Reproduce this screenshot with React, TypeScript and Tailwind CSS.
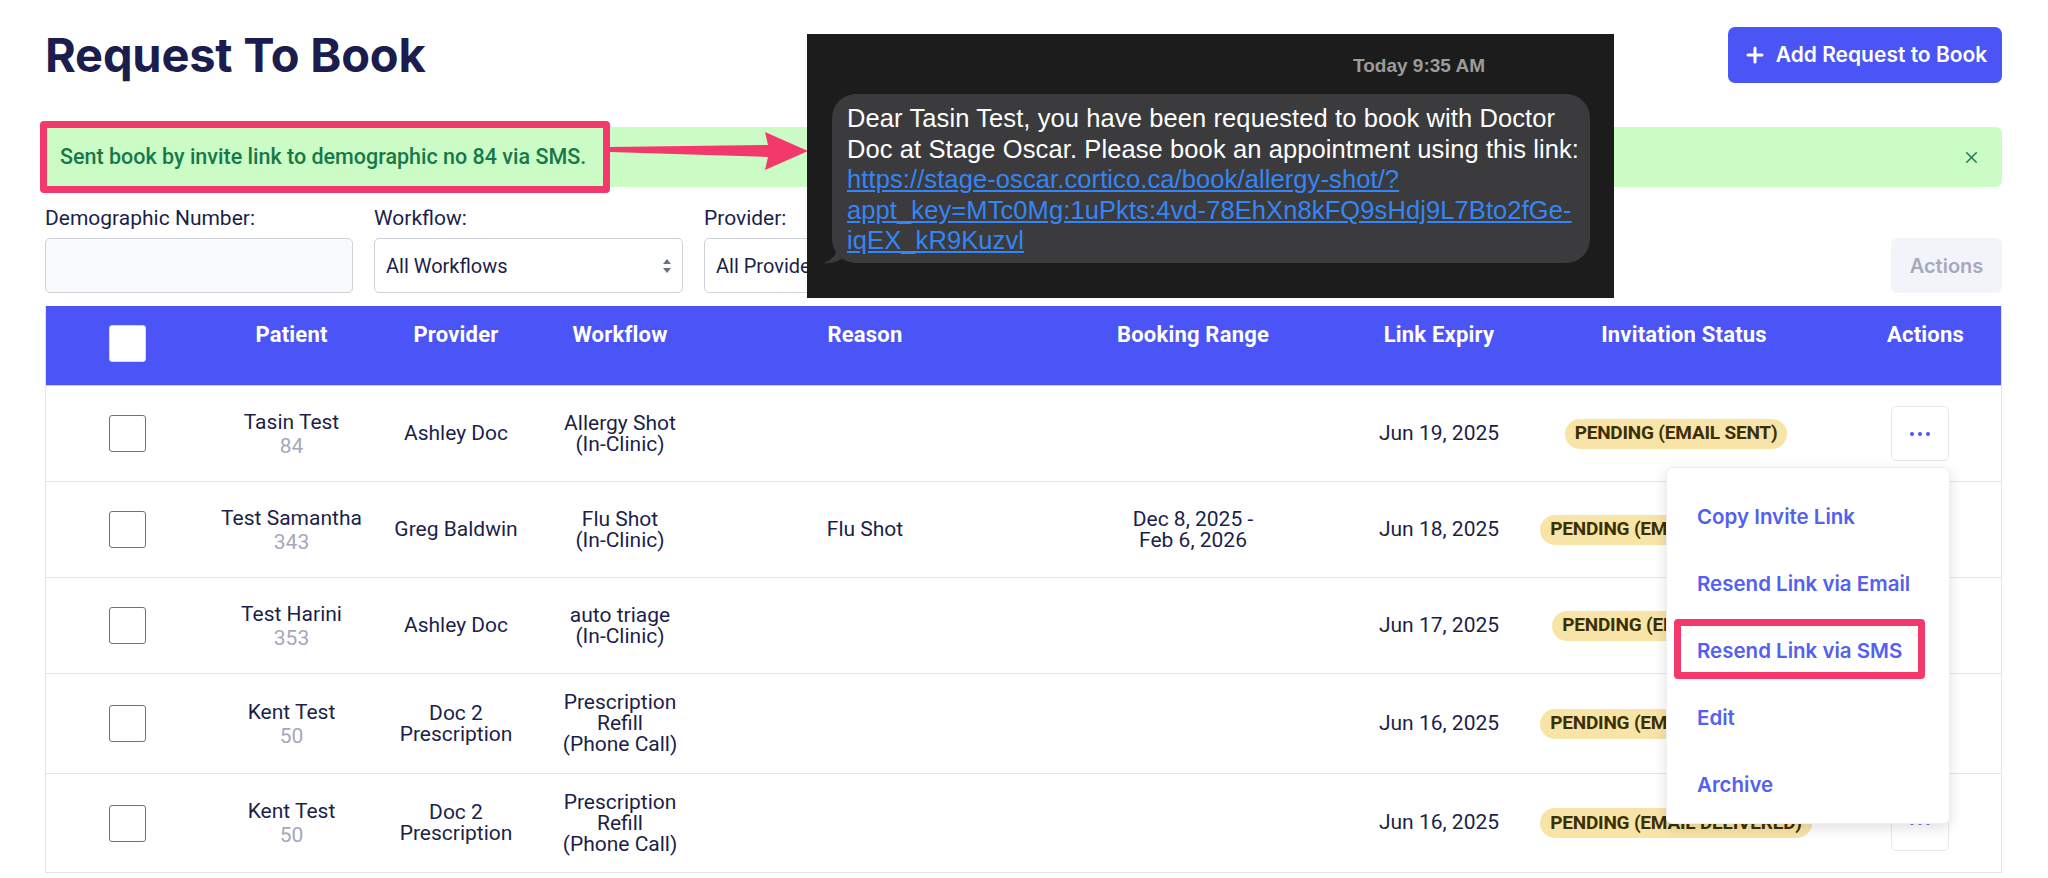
import { Plus, X } from "lucide-react";

interface Row {
  name: string;
  no: string;
  provider: string[];
  workflow: string[];
  reason: string;
  range: string[];
  expiry: string;
  status: string;
  height: string;
}

const rows: Row[] = [
  {
    name: "Tasin Test",
    no: "84",
    provider: ["Ashley Doc"],
    workflow: ["Allergy Shot", "(In-Clinic)"],
    reason: "",
    range: [],
    expiry: "Jun 19, 2025",
    status: "PENDING (EMAIL SENT)",
    height: "h-[96px]",
  },
  {
    name: "Test Samantha",
    no: "343",
    provider: ["Greg Baldwin"],
    workflow: ["Flu Shot", "(In-Clinic)"],
    reason: "Flu Shot",
    range: ["Dec 8, 2025 -", "Feb 6, 2026"],
    expiry: "Jun 18, 2025",
    status: "PENDING (EMAIL DELIVERED)",
    height: "h-[96px]",
  },
  {
    name: "Test Harini",
    no: "353",
    provider: ["Ashley Doc"],
    workflow: ["auto triage", "(In-Clinic)"],
    reason: "",
    range: [],
    expiry: "Jun 17, 2025",
    status: "PENDING (EMAIL OPENED)",
    height: "h-[96px]",
  },
  {
    name: "Kent Test",
    no: "50",
    provider: ["Doc 2", "Prescription"],
    workflow: ["Prescription", "Refill", "(Phone Call)"],
    reason: "",
    range: [],
    expiry: "Jun 16, 2025",
    status: "PENDING (EMAIL DELIVERED)",
    height: "h-[100px]",
  },
  {
    name: "Kent Test",
    no: "50",
    provider: ["Doc 2", "Prescription"],
    workflow: ["Prescription", "Refill", "(Phone Call)"],
    reason: "",
    range: [],
    expiry: "Jun 16, 2025",
    status: "PENDING (EMAIL DELIVERED)",
    height: "h-[99px]",
  },
];

const cols =
  "grid grid-cols-[163px_165px_164px_164px_326px_330px_162px_328px_155px]";

const menuItems = [
  "Copy Invite Link",
  "Resend Link via Email",
  "Resend Link via SMS",
  "Edit",
  "Archive",
];

function Chevrons() {
  return (
    <svg width="10" height="16" viewBox="0 0 10 16" className="fill-[#6b7280]">
      <path d="M5 1 L9 6 H1 Z" />
      <path d="M5 15 L9 10 H1 Z" />
    </svg>
  );
}

function Dots() {
  return (
    <div className="flex items-center gap-[4px]">
      <span className="h-[4px] w-[4px] rounded-full bg-[#4b55f6]" />
      <span className="h-[4px] w-[4px] rounded-full bg-[#4b55f6]" />
      <span className="h-[4px] w-[4px] rounded-full bg-[#4b55f6]" />
    </div>
  );
}

function Lines({ items }: { items: string[] }) {
  return (
    <div className="flex flex-col items-center leading-[21px]">
      {items.map((t, i) => (
        <span key={i}>{t}</span>
      ))}
    </div>
  );
}

export default function App() {
  return (
    <div className="relative h-[878px] w-[2048px] overflow-hidden bg-white pl-[45px] pr-[46px] pt-[27px] font-['Roboto',sans-serif] text-[#1c1f4a]">
      {/* Header */}
      <div className="flex h-[56px] items-center justify-between">
        <h1 className="font-['Inter',sans-serif] text-[47px] font-bold leading-[56px] tracking-[-0.2px] text-[#1a1d4e]">
          Request To Book
        </h1>
        <button className="flex h-[56px] w-[274px] items-center justify-center gap-[9px] rounded-[7px] bg-[#4b55f5] font-['Inter',sans-serif] text-[21px] font-semibold text-white">
          <Plus size={24} strokeWidth={3} />
          Add Request to Book
        </button>
      </div>

      {/* Success banner */}
      <div className="relative mt-[44px] flex h-[60px] items-center justify-between rounded-[6px] bg-[#ccfcc5] pl-[15px] pr-[21px]">
        <span className="text-[21.5px] font-medium text-[#16794a]">
          Sent book by invite link to demographic no 84 via SMS.
        </span>
        <X size={19} strokeWidth={1.8} className="text-[#16794a]" />
        <div className="absolute left-[-5px] top-[-6px] h-[72px] w-[570px] rounded-[4px] border-[7px] border-[#f3396b]" />
      </div>

      {/* Filters */}
      <div className="mt-[19px] flex items-end justify-between">
        <div className="flex gap-[21px]">
          <div className="flex w-[308px] flex-col gap-[8px]">
            <span className="text-[21px] leading-[24px]">Demographic Number:</span>
            <div className="h-[55px] rounded-[5px] border border-[#cfd2d8] bg-[#f9fafb]" />
          </div>
          <div className="flex w-[309px] flex-col gap-[8px]">
            <span className="text-[21px] leading-[24px]">Workflow:</span>
            <div className="flex h-[55px] items-center justify-between rounded-[5px] border border-[#cfd2d8] bg-white pl-[11px] pr-[10px] text-[20px]">
              All Workflows
              <Chevrons />
            </div>
          </div>
          <div className="flex w-[309px] flex-col gap-[8px]">
            <span className="text-[21px] leading-[24px]">Provider:</span>
            <div className="flex h-[55px] items-center justify-between rounded-[5px] border border-[#cfd2d8] bg-white pl-[11px] pr-[10px] text-[20px]">
              All Providers
              <Chevrons />
            </div>
          </div>
        </div>
        <button className="h-[55px] w-[111px] rounded-[6px] bg-[#f3f4f9] font-['Inter',sans-serif] text-[20px] font-semibold text-[#a6a9bd]">
          Actions
        </button>
      </div>

      {/* Table */}
      <div className="mt-[13px] border-x border-[#e3e5ea]">
        <div className={`${cols} h-[80px] border-b border-[#c9ccfb] bg-[#4b55f7] text-center text-[22px] font-bold leading-[24px] tracking-[0.2px] text-white`}>
          <div className="flex justify-center pt-[19px]">
            <div className="h-[37px] w-[37px] rounded-[3px] border border-[#d5d8fb] bg-white" />
          </div>
          <div className="pt-[17px]">Patient</div>
          <div className="pt-[17px]">Provider</div>
          <div className="pt-[17px]">Workflow</div>
          <div className="pt-[17px]">Reason</div>
          <div className="pt-[17px]">Booking Range</div>
          <div className="pt-[17px]">Link Expiry</div>
          <div className="pt-[17px]">Invitation Status</div>
          <div className="pt-[17px]">Actions</div>
        </div>

        {rows.map((r, i) => (
          <div
            key={i}
            className={`${cols} ${r.height} items-center border-b border-[#e2e4e9] text-center text-[21px]`}
          >
            <div className="flex justify-center">
              <div className="h-[37px] w-[37px] rounded-[3px] border-[1.5px] border-[#727272] bg-white" />
            </div>
            <div className="flex flex-col items-center leading-[24px]">
              <span>{r.name}</span>
              <span className="text-[#a5a8bd]">{r.no}</span>
            </div>
            <Lines items={r.provider} />
            <Lines items={r.workflow} />
            <div>{r.reason}</div>
            <Lines items={r.range} />
            <div>{r.expiry}</div>
            <div className="flex justify-center pr-[16px]">
              <span className="flex h-[30px] items-center rounded-full bg-[#f8e4a6] px-[10px] text-[19px] font-bold tracking-[-0.2px] text-[#3b2f06]">
                {r.status}
              </span>
            </div>
            <div className="flex justify-center pr-[11px]">
              <div className="relative">
                <button className="flex h-[55px] w-[58px] items-center justify-center rounded-[5px] border border-[#e6e8ee] bg-white">
                  <Dots />
                </button>
                {i === 0 && (
                  <div className="absolute right-[-1px] top-[61px] z-10 w-[284px] rounded-[6px] border border-[#eceef2] bg-white pb-[4px] pt-[16px] text-left font-['Inter',sans-serif] text-[20.5px] font-semibold text-[#5360f0] shadow-[0_4px_14px_rgba(0,0,0,0.12)]">
                    {menuItems.map((m, k) => (
                      <div key={m} className="relative flex h-[67px] items-center pl-[30px]">
                        {m}
                        {k === 2 && (
                          <div className="absolute left-[7px] top-[1px] h-[60px] w-[251px] rounded-[4px] border-[7px] border-[#f3396b]" />
                        )}
                      </div>
                    ))}
                  </div>
                )}
              </div>
            </div>
          </div>
        ))}
      </div>

      {/* Annotation arrow */}
      <svg
        width="200"
        height="48"
        viewBox="0 0 200 48"
        className="absolute left-[610px] top-[126px] z-20 fill-[#f3396b]"
      >
        <polygon points="0,21 158,19 155,6 198,25 155,44 158,31 0,26" />
      </svg>

      {/* SMS screenshot */}
      <div className="absolute left-[807px] top-[34px] z-20 h-[264px] w-[807px] bg-[#1c1c1c] font-['Liberation_Sans',sans-serif]">
        <div className="absolute left-[546px] top-[21px] text-[19px] font-semibold leading-[22px] text-[#9b9b9b]">
          Today 9:35 AM
        </div>
        <div className="absolute left-[25px] top-[60px] h-[169px] w-[758px] rounded-[24px] bg-[#3b3b3d] px-[15px] py-[9px] text-[25.5px] leading-[30.5px] tracking-[0.1px] text-white whitespace-nowrap">
          Dear Tasin Test, you have been requested to book with Doctor
          <br />
          Doc at Stage Oscar. Please book an appointment using this link:
          <br />
          <span className="text-[#3486f6] underline">
            https://stage-oscar.cortico.ca/book/allergy-shot/?
            <br />
            appt_key=MTc0Mg:1uPkts:4vd-78EhXn8kFQ9sHdj9L7Bto2fGe-
            <br />
            iqEX_kR9Kuzvl
          </span>
        </div>
        <svg
          width="24"
          height="18"
          viewBox="0 0 24 18"
          className="absolute left-[16px] top-[212px] fill-[#3b3b3d]"
        >
          <path d="M14 0 C14 8 10 14 0 17 C9 18 17 15 24 9 Z" />
        </svg>
      </div>
    </div>
  );
}
